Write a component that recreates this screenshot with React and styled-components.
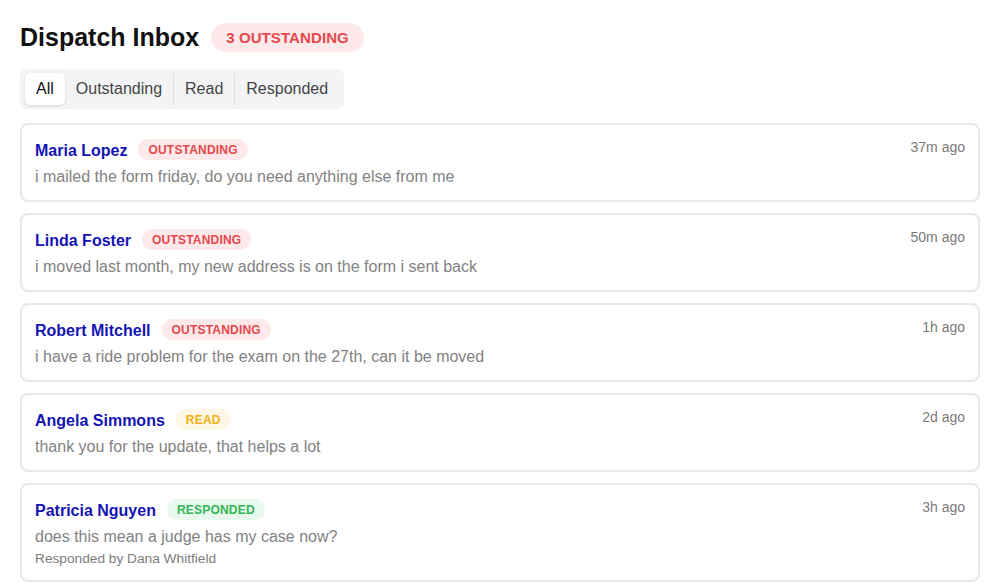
import React, { useState } from "react";
import styled, { createGlobalStyle } from "styled-components";

const GlobalStyle = createGlobalStyle`
  body {
    margin: 0;
    background: #ffffff;
    font-family: "Liberation Sans", Arial, sans-serif;
  }
`;

const tones = {
  outstanding: { fg: "#e5484d", bg: "#fde9e9" },
  read: { fg: "#eeb014", bg: "#fef7e4" },
  responded: { fg: "#34b556", bg: "#e7f8ec" },
};

const Page = styled.div`
  padding: 20px 20px 0 20px;
`;

const Header = styled.div`
  display: flex;
  align-items: center;
  gap: 12px;
  margin-top: 3px;
`;

const Title = styled.h1`
  margin: 0;
  font-size: 25px;
  font-weight: 700;
  color: #111;
`;

const CountBadge = styled.span`
  display: inline-flex;
  align-items: center;
  height: 29px;
  padding: 0 15px;
  border-radius: 15px;
  background: #fde9e9;
  color: #e5484d;
  font-size: 15px;
  font-weight: 700;
  letter-spacing: 0.1px;
`;

const Tabs = styled.div`
  display: inline-flex;
  align-items: center;
  margin-top: 17px;
  padding: 4px 5px;
  background: #f3f4f6;
  border-radius: 6px;
`;

const Tab = styled.button`
  border: none;
  font-family: inherit;
  font-size: 16px;
  height: 32px;
  padding: 0 11px;
  cursor: pointer;
  background: ${(p) => (p.active ? "#ffffff" : "transparent")};
  color: ${(p) => (p.active ? "#111" : "#444")};
  box-shadow: ${(p) => (p.active ? "0 1px 3px rgba(0,0,0,0.12)" : "none")};
  border-left: ${(p) => (p.divider ? "1px solid #dcdee2" : "none")};
  border-radius: ${(p) => (p.divider ? "0" : "5px")};
`;

const List = styled.div`
  display: flex;
  flex-direction: column;
  gap: 11px;
  margin-top: 14px;
`;

const Card = styled.div`
  border: 2px solid #e7e8ea;
  border-radius: 8px;
  padding: 14px 13px 11px 13px;
  display: flex;
  justify-content: space-between;
  align-items: flex-start;
`;

const Body = styled.div`
  display: flex;
  flex-direction: column;
`;

const NameRow = styled.div`
  display: flex;
  align-items: center;
  gap: 11px;
  height: 24px;
`;

const Name = styled.span`
  font-size: 16px;
  font-weight: 700;
  color: #1414b4;
`;

const Status = styled.span`
  display: inline-flex;
  align-items: center;
  height: 21px;
  padding: 0 10px;
  border-radius: 11px;
  font-size: 12px;
  font-weight: 700;
  letter-spacing: 0.2px;
  margin-top: -3px;
  color: ${(p) => tones[p.tone].fg};
  background: ${(p) => tones[p.tone].bg};
`;

const Message = styled.div`
  font-size: 16px;
  line-height: 24px;
  color: #828282;
  margin-top: 2px;
`;

const Meta = styled.div`
  font-size: 13.7px;
  line-height: 20px;
  color: #7d7d7d;
`;

const Time = styled.span`
  font-size: 14px;
  color: #7a7a7a;
`;

const messages = [
  { name: "Maria Lopez", status: "outstanding", text: "i mailed the form friday, do you need anything else from me", time: "37m ago" },
  { name: "Linda Foster", status: "outstanding", text: "i moved last month, my new address is on the form i sent back", time: "50m ago" },
  { name: "Robert Mitchell", status: "outstanding", text: "i have a ride problem for the exam on the 27th, can it be moved", time: "1h ago" },
  { name: "Angela Simmons", status: "read", text: "thank you for the update, that helps a lot", time: "2d ago" },
  { name: "Patricia Nguyen", status: "responded", text: "does this mean a judge has my case now?", time: "3h ago", by: "Dana Whitfield" },
];

const tabs = ["All", "Outstanding", "Read", "Responded"];

const App = () => {
  const [tab, setTab] = useState("All");

  return (
    <Page>
      <GlobalStyle />
      <Header>
        <Title>Dispatch Inbox</Title>
        <CountBadge>3 OUTSTANDING</CountBadge>
      </Header>

      <Tabs>
        {tabs.map((t, i) => (
          <Tab key={t} active={t === tab} divider={i > 1} onClick={() => setTab(t)}>
            {t}
          </Tab>
        ))}
      </Tabs>

      <List>
        {messages.map((m) => (
          <Card key={m.name}>
            <Body>
              <NameRow>
                <Name>{m.name}</Name>
                <Status tone={m.status}>{m.status.toUpperCase()}</Status>
              </NameRow>
              <Message>{m.text}</Message>
              {m.by && <Meta>Responded by {m.by}</Meta>}
            </Body>
            <Time>{m.time}</Time>
          </Card>
        ))}
      </List>
    </Page>
  );
};

export default App;
